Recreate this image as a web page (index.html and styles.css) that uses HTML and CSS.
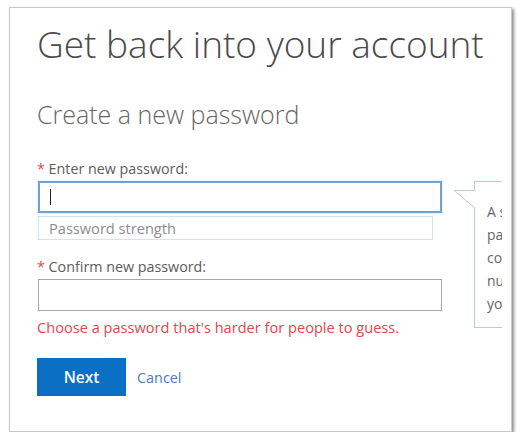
FILE: index.html
```html
<!DOCTYPE html>
<html lang="en">
<head>
<meta charset="utf-8">
<title>Get back into your account</title>
<link rel="stylesheet" href="styles.css">
</head>
<body>
<div class="card">
  <div class="clip">
    <h1 class="title">Get back into your account</h1>
    <h2 class="subtitle">Create a new password</h2>
    <div class="form">
      <div class="label label-first"><span class="req">*</span> Enter new password:</div>
      <div class="field field-focus"><span class="caret"></span></div>
      <div class="strength">Password strength</div>
      <div class="label label-second"><span class="req">*</span> Confirm new password:</div>
      <div class="field field-plain"></div>
      <div class="error">Choose a password that's harder for people to guess.</div>
      <div class="actions">
        <button class="btn-next">Next</button>
        <a class="cancel" href="#">Cancel</a>
      </div>
    </div>
    <div class="tip">
      <svg class="tip-arrow" width="22" height="30" viewBox="0 0 22 30">
        <polygon points="0.5,9.5 21,9.5 21,27" fill="#fff"/>
        <path d="M21,9.5 H0.5 L20.5,27" fill="none" stroke="#b3cde0" stroke-width="1"/>
      </svg>
      <div class="tip-line">A strong password</div>
      <div class="tip-line">passwords contain a</div>
      <div class="tip-line">combination of letters,</div>
      <div class="tip-line">numbers and symbols. Make</div>
      <div class="tip-line">your password unique.</div>
    </div>
  </div>
</div>
</body>
</html>
```

FILE: styles.css
```css
html, body {
  margin: 0;
  padding: 0;
  background: #ffffff;
}

body {
  font-family: "Open Sans", "Noto Sans", "Liberation Sans", sans-serif;
  color: #555;
}

.card {
  box-sizing: border-box;
  width: 503px;
  height: 425px;
  margin: 7px 0 0 9px;
  padding-right: 9px;
  border: 1px solid #c9c9c9;
  box-shadow: 2px 2px 3px rgba(0, 0, 0, 0.45);
  background: #fff;
}

.clip {
  position: relative;
  box-sizing: border-box;
  height: 100%;
  overflow: hidden;
  padding: 12px 0 0 27px;
}

.title {
  margin: 0;
  font-size: 37px;
  line-height: 48px;
  font-weight: 300;
  color: #4a4a4a;
  white-space: nowrap;
}

.subtitle {
  margin: 31px 0 0 0;
  font-size: 25px;
  line-height: 30px;
  font-weight: 300;
  color: #666;
  white-space: nowrap;
}

.form {
  display: flex;
  flex-direction: column;
  align-items: flex-start;
}

.label {
  font-size: 14.3px;
  line-height: 20px;
  color: #5c5c5c;
}

.label-first {
  margin-top: 30px;
}

.label-second {
  margin-top: 17px;
}

.req {
  color: #e04a4a;
}

.field {
  box-sizing: border-box;
  width: 404px;
  height: 32px;
  margin: 2px 0 0 1px;
  background: #fff;
  display: flex;
  align-items: center;
}

.field-focus {
  border: 2px solid #6fa3d8;
  box-shadow: 0 0 1px rgba(60, 120, 200, 0.5);
}

.field-plain {
  border: 1px solid #a6a6a6;
}

.caret {
  width: 1px;
  height: 16px;
  margin-left: 10px;
  background: #222;
}

.strength {
  box-sizing: border-box;
  width: 395px;
  height: 24px;
  margin: 3px 0 0 1px;
  padding-left: 10px;
  border: 1px solid #d3e3ee;
  font-size: 14.6px;
  line-height: 22px;
  color: #8c8c8c;
}

.error {
  margin-top: 6px;
  font-size: 14.6px;
  line-height: 20px;
  color: #e2474c;
  white-space: nowrap;
}

.actions {
  margin-top: 21px;
  display: flex;
  align-items: center;
  gap: 11px;
}

.btn-next {
  width: 89px;
  height: 38px;
  border: none;
  border-radius: 0;
  background: #0b6fc4;
  color: #fff;
  font-family: "Open Sans", "Noto Sans", "Liberation Sans", sans-serif;
  font-size: 15.5px;
  font-weight: 600;
  padding: 0;
}

.cancel {
  font-size: 14.4px;
  color: #4b7bb8;
  text-decoration: none;
}

.tip {
  position: absolute;
  left: 464px;
  top: 173px;
  box-sizing: border-box;
  width: 160px;
  height: 147px;
  padding: 18px 0 0 12px;
  border: 1px solid #b3cde0;
  border-right: none;
  background: #fff;
}

.tip-arrow {
  position: absolute;
  left: -21px;
  top: -1px;
}

.tip-line {
  font-size: 14px;
  line-height: 23px;
  color: #666;
  white-space: nowrap;
}
```
